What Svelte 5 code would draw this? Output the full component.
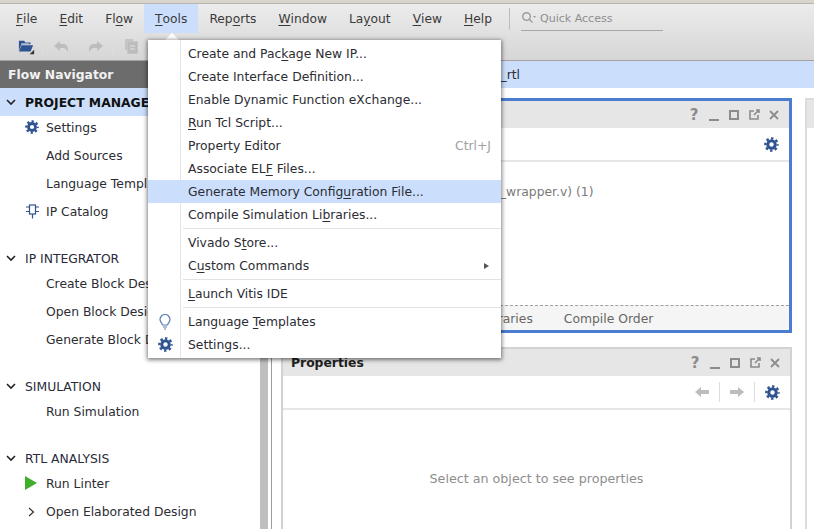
<script>
	// Vivado main window with the Tools menu open
	const menus = [
		['F', 'ile'], ['E', 'dit'], ['Fl', 'o', 'w'], ['', 'T', 'ools'], ['Rep', 'o', 'rts'],
		['', 'W', 'indow'], ['La', 'y', 'out'], ['', 'V', 'iew'], ['', 'H', 'elp']
	];

	const groups = [
		{ title: 'PROJECT MANAGER', active: true, items: [
			{ label: 'Settings', icon: 'gear' },
			{ label: 'Add Sources' },
			{ label: 'Language Templates' },
			{ label: 'IP Catalog', icon: 'chip' }
		] },
		{ title: 'IP INTEGRATOR', items: [
			{ label: 'Create Block Design' },
			{ label: 'Open Block Design' },
			{ label: 'Generate Block Design' }
		] },
		{ title: 'SIMULATION', items: [{ label: 'Run Simulation' }] },
		{ title: 'RTL ANALYSIS', items: [
			{ label: 'Run Linter', icon: 'run' },
			{ label: 'Open Elaborated Design', icon: 'caret' }
		] }
	];

	// each entry: before, mnemonic, after
	const toolSections = [
		[
			{ t: ['Create and Pac', 'k', 'age New IP...'] },
			{ t: ['Create Interface Definition...'] },
			{ t: ['Enable Dynamic Function eXchange...'] },
			{ t: ['', 'R', 'un Tcl Script...'] },
			{ t: ['Property Editor'], key: 'Ctrl+J' },
			{ t: ['Associate EL', 'F', ' Files...'] },
			{ t: ['Generate Memory Config', 'u', 'ration File...'], hover: true },
			{ t: ['Compile Simulation Li', 'b', 'raries...'] }
		],
		[
			{ t: ['Vivado S', 't', 'ore...'] },
			{ t: ['C', 'u', 'stom Commands'], sub: true }
		],
		[{ t: ['', 'L', 'aunch Vitis IDE'] }],
		[
			{ t: ['Language ', 'T', 'emplates'], icon: 'bulb' },
			{ t: ['Settings...'], icon: 'gear' }
		]
	];

	const tabs = ['Hierarchy', 'IP Sources', 'Libraries', 'Compile Order'];
</script>

{#snippet gear(size)}
	<svg class="gear" width={size} height={size} viewBox="0 0 16 16" fill="none" stroke="#2f5391">
		<circle cx="8" cy="8" r="6.5" stroke-width="2.6" stroke-dasharray="2.55 2.55" stroke-dashoffset="1.27" />
		<circle cx="8" cy="8" r="4" stroke-width="3.2" />
	</svg>
{/snippet}

{#snippet windowButtons()}
	<div class="win-buttons">
		<span class="help">?</span>
		<svg width="14" height="14" viewBox="0 0 14 14" fill="none" stroke="#8c8c8c" stroke-width="2">
			<path d="M2 12h10" />
		</svg>
		<svg width="14" height="14" viewBox="0 0 14 14" fill="none" stroke="#8c8c8c" stroke-width="2">
			<rect x="3" y="3" width="8" height="8" />
		</svg>
		<svg width="14" height="14" viewBox="0 0 14 14" fill="none" stroke="#8c8c8c" stroke-width="1.6">
			<path d="M7 3H3v8h8V7M7 7l5-5M9 2h3v3" />
		</svg>
		<svg width="14" height="14" viewBox="0 0 14 14" fill="none" stroke="#8c8c8c" stroke-width="1.8">
			<path d="M3 3l8 8M11 3l-8 8" />
		</svg>
	</div>
{/snippet}

<div class="window">
	<div class="title-strip"></div>

	<div class="chrome">
		<div class="menubar">
			{#each menus as m}
				<div class="menu-item" class:open={m[1] === 'T'}>
					{#if m.length === 2}<u>{m[0]}</u>{m[1]}{:else}{m[0]}<u>{m[1]}</u>{m[2]}{/if}
				</div>
			{/each}
			<div class="bar-sep"></div>
			<div class="quick">
				<svg width="16" height="14" viewBox="0 0 16 14" fill="none" stroke="#9a9a9a" stroke-width="1.4">
					<circle cx="5.5" cy="5.5" r="3.8" />
					<path d="M8.5 8.5l3 3" />
					<path d="M12 5h3l-1.5 2z" fill="#9a9a9a" stroke="none" />
				</svg>
				<span>Quick Access</span>
			</div>
		</div>

		<div class="toolbar">
			<div class="tool folder">
				<svg width="19" height="18" viewBox="0 0 19 18">
					<path d="M1 2h6l1 2h6v2H4L1 13z" fill="#2f5391" />
					<path d="M4 7h13l-3 7H1z" fill="#2f5391" />
					<path d="M3.5 5h9v1h-9z" fill="#cfd8e6" />
					<path d="M18 12v5h-5z" fill="#333" />
				</svg>
			</div>
			<div class="tool-sep"></div>
			<div class="tool">
				<svg width="16" height="14" viewBox="0 0 16 14"><path d="M1 6l6-5v3h3c3 0 5 2 5 6v2c-1-2-3-4-5-4H7v3z" fill="#bdbdbd" /></svg>
			</div>
			<div class="tool-sep"></div>
			<div class="tool">
				<svg width="16" height="14" viewBox="0 0 16 14"><path d="M15 6L9 1v3H6C3 4 1 6 1 10v2c1-2 3-4 5-4h3v3z" fill="#bdbdbd" /></svg>
			</div>
			<div class="tool-sep"></div>
			<div class="tool">
				<svg width="14" height="15" viewBox="0 0 14 15" fill="none" stroke="#bdbdbd" stroke-width="1.5">
					<path d="M2 11V1h7" />
					<rect x="4" y="3" width="9" height="11" fill="#bdbdbd" />
					<path d="M6 7h5M6 10h5" stroke="#e2e2e2" stroke-width="1" />
				</svg>
			</div>
		</div>
	</div>

	<div class="main">
		<aside class="navigator">
			<div class="nav-title">Flow Navigator</div>
			{#each groups as group}
				<section class="nav-group">
					<div class="nav-head" class:active={group.active}>
						<svg width="10" height="7" viewBox="0 0 10 7" fill="none" stroke="#222" stroke-width="1.6"><path d="M1 1l4 4 4-4" /></svg>
						<span>{group.title}</span>
					</div>
					<div class="nav-items">
						{#each group.items as item}
							<div class="nav-item">
								<span class="nav-icon">
									{#if item.icon === 'gear'}
										{@render gear(14)}
									{:else if item.icon === 'chip'}
										<svg width="15" height="15" viewBox="0 0 15 15" fill="none" stroke="#2f5391" stroke-width="1.2">
											<rect x="4.5" y="1" width="6" height="9" />
											<path d="M1 3h3.5M1 7.5h3.5M10.5 3H14M10.5 7.5H14M7.5 10v4.5" />
										</svg>
									{:else if item.icon === 'run'}
										<svg width="12" height="14" viewBox="0 0 12 14"><path d="M0 0l12 7-12 7z" fill="#3fae2a" /></svg>
									{:else if item.icon === 'caret'}
										<svg class="caret" width="7" height="10" viewBox="0 0 7 10" fill="none" stroke="#333" stroke-width="1.2"><path d="M1 1l4.5 4L1 9" /></svg>
									{/if}
								</span>
								{item.label}
							</div>
						{/each}
					</div>
				</section>
			{/each}
		</aside>

		<div class="sash"></div>

		<div class="workspace">
			<div class="design-bar">PROJECT MANAGER - project_rtl</div>
			<div class="panes">
				<div class="stack">
					<div class="panel focused">
						<div class="panel-head">
							<span class="panel-title">Sources</span>
							{@render windowButtons()}
						</div>
						<div class="panel-tools">{@render gear(15)}</div>
						<div class="tree">
							<div class="tree-row">design_1_wrapper <span class="dim">(design_1_wrapper.v) (1)</span></div>
						</div>
						<div class="tabs">
							{#each tabs as tab}<span>{tab}</span>{/each}
						</div>
					</div>

					<div class="panel props">
						<div class="panel-head">
							<span class="panel-title">Properties</span>
							{@render windowButtons()}
						</div>
						<div class="panel-tools">
							<svg width="14" height="12" viewBox="0 0 14 12"><path d="M0 6l6-5v3h8v4H6v3z" fill="#bdbdbd" /></svg>
							<span class="vsep"></span>
							<svg width="14" height="12" viewBox="0 0 14 12"><path d="M14 6L8 1v3H0v4h8v3z" fill="#bdbdbd" /></svg>
							<span class="vsep"></span>
							{@render gear(15)}
						</div>
						<div class="empty">Select an object to see properties</div>
					</div>
				</div>

				<div class="side-panel">
					<div class="side-head"></div>
				</div>
			</div>
		</div>
	</div>

	<!-- open Tools menu -->
	<div class="notch"></div>
	<div class="tools-menu">
		{#each toolSections as section, i}
			{#if i > 0}<div class="menu-sep"></div>{/if}
			{#each section as entry}
				<div class="entry" class:hover={entry.hover}>
					<span class="entry-icon">
						{#if entry.icon === 'gear'}
							{@render gear(15)}
						{:else if entry.icon === 'bulb'}
							<svg width="12" height="16" viewBox="0 0 12 16" fill="none" stroke="#5b7cae" stroke-width="1.2">
								<path d="M3.5 11C3 9 1 8 1 5.5a5 5 0 0 1 10 0C11 8 9 9 8.5 11z" />
								<path d="M4 13h4M5 15h2" />
							</svg>
						{/if}
					</span>
					<span class="entry-label">
						{#if entry.t.length === 1}{entry.t[0]}{:else}{entry.t[0]}<u>{entry.t[1]}</u>{entry.t[2]}{/if}
					</span>
					{#if entry.key}<span class="entry-key">{entry.key}</span>{/if}
					{#if entry.sub}<span class="entry-sub"></span>{/if}
				</div>
			{/each}
		{/each}
	</div>
</div>

<style>
	:global(body) {
		margin: 0;
		background: #fff;
	}

	.window {
		position: relative;
		display: flex;
		flex-direction: column;
		width: 814px;
		height: 529px;
		overflow: hidden;
		font-family: "DejaVu Sans", sans-serif;
		font-size: 12.35px;
		color: #2c2c33;
	}

	u {
		text-underline-offset: 2px;
	}

	.title-strip {
		height: 3px;
		background: #d9d5cd;
		border-bottom: 1px solid #b9b6b0;
	}

	.chrome {
		height: 56px;
		background: linear-gradient(#ececec, #d6d6d6);
		border-bottom: 1px solid #a5a19c;
	}

	.menubar {
		display: flex;
		align-items: center;
		height: 29px;
		padding-left: 5px;
	}

	.menu-item {
		display: flex;
		align-items: center;
		height: 29px;
		padding: 0 11px;
		font-size: 12.25px;
		white-space: pre;
		color: #3a3a3a;
	}

	.menu-item.open {
		background: #cbdffc;
	}

	.bar-sep {
		width: 1px;
		height: 22px;
		margin-left: 6px;
		background: #bdbdbd;
	}

	.quick {
		display: flex;
		align-items: center;
		gap: 3px;
		width: 142px;
		height: 24px;
		margin-left: 11px;
		border-bottom: 1px solid #a8a8a8;
		font-size: 11.05px;
		color: #8e8e8e;
		box-sizing: border-box;
	}

	.toolbar {
		display: flex;
		align-items: center;
		height: 27px;
		padding-left: 18px;
	}

	.tool {
		display: flex;
		justify-content: center;
		width: 17px;
		margin-right: 8px;
	}

	.tool.folder {
		margin-right: 7px;
	}

	.tool-sep {
		width: 1px;
		height: 19px;
		margin-right: 9px;
		background: #dcdcdc;
	}

	.main {
		flex: 1;
		display: flex;
		min-height: 0;
	}

	.navigator {
		width: 259px;
		flex: none;
		background: #fff;
	}

	.nav-title {
		display: flex;
		align-items: center;
		height: 27px;
		padding-left: 8px;
		background: #6c6c6c;
		color: #f2f2f2;
		font-weight: 700;
	}

	.nav-group {
		margin-bottom: 19px;
	}

	.nav-head {
		display: flex;
		align-items: center;
		gap: 9px;
		box-sizing: border-box;
		height: 28px;
		padding: 1px 0 0 6px;
		color: #2a2a3a;
	}

	.nav-head.active {
		background: #cbdffc;
		font-weight: 700;
		color: #111;
	}

	.nav-items {
		margin-top: -3px;
	}

	.nav-item {
		position: relative;
		display: flex;
		align-items: center;
		box-sizing: border-box;
		height: 28px;
		padding: 1px 0 0 46px;
	}

	.nav-icon {
		position: absolute;
		left: 25px;
		top: 7px;
		display: flex;
	}

	.caret {
		margin: 3px 0 0 3px;
	}

	.sash {
		width: 8px;
		margin-left: 1px;
		flex: none;
		background: #bfbfbf;
	}

	.workspace {
		flex: 1;
		display: flex;
		flex-direction: column;
		min-width: 0;
	}

	.design-bar {
		display: flex;
		align-items: center;
		justify-content: flex-end;
		height: 27px;
		padding-right: 294px;
		background: #cbdffc;
		white-space: nowrap;
	}

	.panes {
		flex: 1;
		display: flex;
		gap: 13px;
		padding: 10px 0 0 2px;
		min-height: 0;
		background: linear-gradient(90deg, #9d9d9d 1px, #fff 1px);
		background-position: 3px 0;
		background-repeat: no-repeat;
	}

	.stack {
		flex: none;
		display: flex;
		flex-direction: column;
		gap: 14px;
		width: 511px;
		margin-left: 11px;
	}

	.panel {
		flex: none;
		display: flex;
		flex-direction: column;
		box-sizing: border-box;
		background: #fff;
		border: 2px solid #d2d2d2;
	}

	.panel.focused {
		height: 235px;
		border: 3px solid #4a7dd0;
	}

	.panel.props {
		height: 202px;
	}

	.panel-head {
		flex: none;
		display: flex;
		align-items: center;
		height: 27px;
		padding-left: 8px;
		background: #e6e6e6;
	}

	.panel-title {
		font-weight: 700;
		color: #222;
	}

	.win-buttons {
		display: flex;
		align-items: center;
		gap: 6px;
		margin-left: auto;
		padding-right: 8px;
	}

	.help {
		width: 14px;
		text-align: center;
		font-size: 15px;
		line-height: 14px;
		font-weight: 700;
		color: #8c8c8c;
	}

	.panel-tools {
		flex: none;
		display: flex;
		align-items: center;
		justify-content: flex-end;
		gap: 10px;
		box-sizing: border-box;
		height: 34px;
		padding-right: 10px;
		border-bottom: 2px solid #e6e6e6;
	}

	.vsep {
		width: 1px;
		height: 20px;
		background: #dcdcdc;
	}

	.tree {
		flex: 1;
		padding: 23px 0 0 40px;
	}

	.tree-row {
		white-space: nowrap;
	}

	.dim {
		color: #7a7a7a;
	}

	.tabs {
		flex: none;
		display: flex;
		align-items: center;
		gap: 31px;
		height: 25px;
		padding: 1px 0 0 10px;
		box-sizing: border-box;
		background: #f5f5f5;
		border-top: 1px dashed #a0a0a0;
		color: #666;
	}

	.empty {
		flex: 1;
		display: flex;
		align-items: center;
		justify-content: center;
		font-size: 12.7px;
		color: #8e8e8e;
	}

	.side-panel {
		flex: 1;
		box-sizing: border-box;
		border-left: 2px solid #dcdcdc;
		border-top: 2px solid #dcdcdc;
		background: #fff;
	}

	.side-head {
		height: 28px;
		background: #e6e6e6;
	}

	.notch {
		position: absolute;
		left: 165px;
		top: 33px;
		width: 0;
		height: 0;
		border-left: 7px solid transparent;
		border-right: 7px solid transparent;
		border-bottom: 7px solid #fff;
	}

	.tools-menu {
		position: absolute;
		left: 148px;
		top: 40px;
		width: 353px;
		height: 318px;
		box-sizing: border-box;
		padding-top: 2px;
		background: linear-gradient(90deg, #fff 32px, #e4e4e4 32px, #e4e4e4 33px, #fff 33px);
		box-shadow: 0 1px 4px 1px rgba(0, 0, 0, 0.5);
	}

	.entry {
		display: flex;
		align-items: center;
		height: 23px;
		color: #2c2c33;
	}

	.entry.hover {
		background: #cbdffc;
	}

	.entry-icon {
		flex: none;
		display: flex;
		justify-content: center;
		width: 34px;
	}

	.entry-label {
		margin-left: 6px;
		white-space: pre;
	}

	.entry-key {
		margin-left: auto;
		margin-right: 10px;
		color: #a0a0a0;
	}

	.entry-sub {
		margin-left: auto;
		margin-right: 12px;
		border-left: 5px solid #555;
		border-top: 3px solid transparent;
		border-bottom: 3px solid transparent;
	}

	.menu-sep {
		height: 1px;
		margin: 2px 0 2px 35px;
		background: #e2e2e2;
	}
</style>
